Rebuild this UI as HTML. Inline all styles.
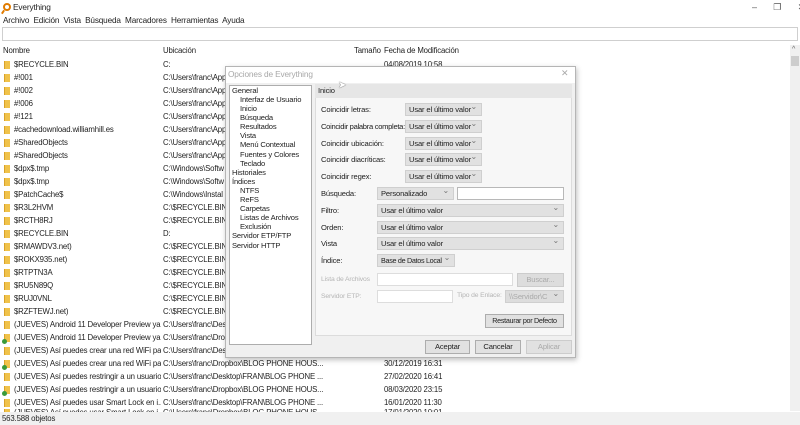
<!DOCTYPE html>
<html><head><meta charset="utf-8"><style>
*{margin:0;padding:0;box-sizing:border-box}
body{width:800px;height:425px;overflow:hidden;background:#fff;font-family:"Liberation Sans",sans-serif;font-size:7.8px;letter-spacing:-0.15px;color:#222;position:relative}
.a{position:absolute;white-space:nowrap}
.r{position:absolute;left:0;width:790px;height:13px;line-height:13px;white-space:nowrap}
.r i{position:absolute;left:4px;top:3px;width:6px;height:8px;background:#f0c24a;border-left:1px solid #d9a22a}
.r b{font-weight:normal;position:absolute;left:14px;width:147px;overflow:hidden}
.r u{text-decoration:none;position:absolute;left:163px;width:190px;overflow:hidden}
.r s{text-decoration:none;position:absolute;left:384px}
.g{position:absolute;left:2px;top:8px;width:5px;height:5px;border-radius:50%;background:#3a9a3a}
.dd{position:absolute;height:13px;background:#e1e1e1;border:1px solid #cfcfcf;line-height:11px;padding-left:3px;font-size:7.6px;white-space:nowrap;overflow:hidden}
.dd:after{content:"⌄";position:absolute;right:4px;top:-3px;color:#777;font-size:8px}
.tb{position:absolute;height:13px;background:#fff;border:1px solid #b8b8b8}
.btn{position:absolute;height:14px;background:#e1e1e1;border:1px solid #adadad;text-align:center;line-height:12px;font-size:7.6px;white-space:nowrap;overflow:hidden}
.lab{position:absolute;left:321px;font-size:7.6px;line-height:10px;white-space:nowrap}
.tr{position:absolute;font-size:7.6px;line-height:9px;white-space:nowrap}
</style></head><body>
<div class="a" style="left:3px;top:3px;width:8px;height:8px;border:2px solid #e07b00;border-radius:50%"></div>
<div class="a" style="left:2px;top:10px;width:2px;height:4px;background:#e07b00;transform:rotate(35deg)"></div>
<div class="a" style="left:13px;top:2px;font-size:8.3px">Everything</div>
<div class="a" style="left:752px;top:2px;font-size:9px;color:#555">–&nbsp;&nbsp;&nbsp;&nbsp;&nbsp;&nbsp;&nbsp;❐&nbsp;&nbsp;&nbsp;&nbsp;&nbsp;&nbsp;&nbsp;✕</div>
<div class="a" style="left:3px;top:16px;font-size:8.2px">Archivo&nbsp; Edición&nbsp; Vista&nbsp; Búsqueda&nbsp; Marcadores&nbsp; Herramientas&nbsp; Ayuda</div>
<div class="a" style="left:2px;top:27px;width:796px;height:14px;border:1px solid #cfcfcf"></div>
<div class="a" style="left:3px;top:46px">Nombre</div>
<div class="a" style="left:163px;top:46px">Ubicación</div>
<div class="a" style="left:354px;top:46px">Tamaño</div>
<div class="a" style="left:384px;top:46px">Fecha de Modificación</div>
<div class="a" style="left:790px;top:45px;width:10px;height:366px;background:#f0f0f0"></div>
<div class="a" style="left:791px;top:56px;width:8px;height:10px;background:#cdcdcd"></div>
<div class="a" style="left:792px;top:46px;font-size:7px;color:#666">^</div>

<div class="r" style="top:58px"><i></i><b>$RECYCLE.BIN</b><u>C:</u><s>04/08/2019 10:58</s></div>
<div class="r" style="top:71px"><i></i><b>#!001</b><u>C:\Users\franc\App</u></div>
<div class="r" style="top:84px"><i></i><b>#!002</b><u>C:\Users\franc\App</u></div>
<div class="r" style="top:97px"><i></i><b>#!006</b><u>C:\Users\franc\App</u></div>
<div class="r" style="top:110px"><i></i><b>#!121</b><u>C:\Users\franc\App</u></div>
<div class="r" style="top:123px"><i></i><b>#cachedownload.williamhill.es</b><u>C:\Users\franc\App</u></div>
<div class="r" style="top:136px"><i></i><b>#SharedObjects</b><u>C:\Users\franc\App</u></div>
<div class="r" style="top:149px"><i></i><b>#SharedObjects</b><u>C:\Users\franc\App</u></div>
<div class="r" style="top:162px"><i></i><b>$dpx$.tmp</b><u>C:\Windows\Softw</u></div>
<div class="r" style="top:175px"><i></i><b>$dpx$.tmp</b><u>C:\Windows\Softw</u></div>
<div class="r" style="top:188px"><i></i><b>$PatchCache$</b><u>C:\Windows\Instal</u></div>
<div class="r" style="top:201px"><i></i><b>$R3L2HVM</b><u>C:\$RECYCLE.BIN\S</u></div>
<div class="r" style="top:214px"><i></i><b>$RCTH8RJ</b><u>C:\$RECYCLE.BIN\S</u></div>
<div class="r" style="top:227px"><i></i><b>$RECYCLE.BIN</b><u>D:</u></div>
<div class="r" style="top:240px"><i></i><b>$RMAWDV3.net)</b><u>C:\$RECYCLE.BIN\S</u></div>
<div class="r" style="top:253px"><i></i><b>$ROKX935.net)</b><u>C:\$RECYCLE.BIN\S</u></div>
<div class="r" style="top:266px"><i></i><b>$RTPTN3A</b><u>C:\$RECYCLE.BIN\S</u></div>
<div class="r" style="top:279px"><i></i><b>$RU5N89Q</b><u>C:\$RECYCLE.BIN\S</u></div>
<div class="r" style="top:292px"><i></i><b>$RUJ0VNL</b><u>C:\$RECYCLE.BIN\S</u></div>
<div class="r" style="top:305px"><i></i><b>$RZFTEWJ.net)</b><u>C:\$RECYCLE.BIN\S</u></div>
<div class="r" style="top:318px"><i></i><b>(JUEVES) Android 11 Developer Preview ya...</b><u>C:\Users\franc\Des</u></div>
<div class="r" style="top:331px"><i></i><span class="g"></span><b>(JUEVES) Android 11 Developer Preview ya...</b><u>C:\Users\franc\Dro</u></div>
<div class="r" style="top:344px"><i></i><b>(JUEVES) Así puedes crear una red WiFi pa...</b><u>C:\Users\franc\Des</u></div>
<div class="r" style="top:357px"><i></i><span class="g"></span><b>(JUEVES) Así puedes crear una red WiFi pa...</b><u>C:\Users\franc\Dropbox\BLOG PHONE HOUS...</u><s>30/12/2019 16:31</s></div>
<div class="r" style="top:370px"><i></i><b>(JUEVES) Así puedes restringir a un usuario...</b><u>C:\Users\franc\Desktop\FRAN\BLOG PHONE ...</u><s>27/02/2020 16:41</s></div>
<div class="r" style="top:383px"><i></i><span class="g"></span><b>(JUEVES) Así puedes restringir a un usuario...</b><u>C:\Users\franc\Dropbox\BLOG PHONE HOUS...</u><s>08/03/2020 23:15</s></div>
<div class="r" style="top:396px"><i></i><b>(JUEVES) Así puedes usar Smart Lock en i...</b><u>C:\Users\franc\Desktop\FRAN\BLOG PHONE ...</u><s>16/01/2020 11:30</s></div>
<div class="r" style="top:406px"><i></i><span class="g"></span><b>(JUEVES) Así puedes usar Smart Lock en i...</b><u>C:\Users\franc\Dropbox\BLOG PHONE HOUS...</u><s>17/01/2020 10:01</s></div>
<div class="a" style="left:0;top:412px;width:800px;height:13px;background:#f0f0f0;padding-left:2px;line-height:13px">563.588 objetos</div>

<!-- dialog -->
<div class="a" style="left:225px;top:66px;width:351px;height:292px;background:#f0f0f0;border:1px solid #b5b5b5;box-shadow:1px 2px 5px rgba(0,0,0,.25)"></div>
<div class="a" style="left:226px;top:67px;width:349px;height:16px;background:#fff"></div>
<div class="a" style="left:228px;top:69px;font-size:8.3px;color:#a8a8a8">Opciones de Everything</div>
<div class="a" style="left:561px;top:68px;font-size:9px;color:#aaa">✕</div>
<div class="a" style="left:229px;top:85px;width:83px;height:260px;background:#fff;border:1px solid #adadad"></div>
<div class="tr" style="left:232px;top:86px">General</div>
<div class="tr" style="left:240px;top:95px">Interfaz de Usuario</div>
<div class="tr" style="left:240px;top:104px">Inicio</div>
<div class="tr" style="left:240px;top:113px">Búsqueda</div>
<div class="tr" style="left:240px;top:122px">Resultados</div>
<div class="tr" style="left:240px;top:131px">Vista</div>
<div class="tr" style="left:240px;top:140px">Menú Contextual</div>
<div class="tr" style="left:240px;top:150px">Fuentes y Colores</div>
<div class="tr" style="left:240px;top:159px">Teclado</div>
<div class="tr" style="left:232px;top:168px">Historiales</div>
<div class="tr" style="left:232px;top:177px">Índices</div>
<div class="tr" style="left:240px;top:186px">NTFS</div>
<div class="tr" style="left:240px;top:195px">ReFS</div>
<div class="tr" style="left:240px;top:204px">Carpetas</div>
<div class="tr" style="left:240px;top:213px">Listas de Archivos</div>
<div class="tr" style="left:240px;top:222px">Exclusión</div>
<div class="tr" style="left:232px;top:231px">Servidor ETP/FTP</div>
<div class="tr" style="left:232px;top:241px">Servidor HTTP</div>
<div class="a" style="left:315px;top:84px;width:257px;height:252px;background:#f7f7f7;border:1px solid #dcdcdc"></div>
<div class="a" style="left:315px;top:84px;width:257px;height:14px;background:#e6e6e6"></div>
<div class="a" style="left:318px;top:86px;font-size:7.6px">Inicio</div>
<div class="lab" style="top:105px">Coincidir letras:</div><div class="dd" style="left:405px;top:103px;width:77px">Usar el último valor</div>
<div class="lab" style="top:122px;letter-spacing:-0.3px">Coincidir palabra completa:</div><div class="dd" style="left:405px;top:120px;width:77px">Usar el último valor</div>
<div class="lab" style="top:139px">Coincidir ubicación:</div><div class="dd" style="left:405px;top:137px;width:77px">Usar el último valor</div>
<div class="lab" style="top:155px">Coincidir diacríticas:</div><div class="dd" style="left:405px;top:153px;width:77px">Usar el último valor</div>
<div class="lab" style="top:172px">Coincidir regex:</div><div class="dd" style="left:405px;top:170px;width:77px">Usar el último valor</div>
<div class="lab" style="top:189px">Búsqueda:</div><div class="dd" style="left:377px;top:187px;width:77px">Personalizado</div><div class="tb" style="left:457px;top:187px;width:107px"></div>
<div class="lab" style="top:206px">Filtro:</div><div class="dd" style="left:377px;top:204px;width:187px">Usar el último valor</div>
<div class="lab" style="top:223px">Orden:</div><div class="dd" style="left:377px;top:221px;width:187px">Usar el último valor</div>
<div class="lab" style="top:239px">Vista</div><div class="dd" style="left:377px;top:237px;width:187px">Usar el último valor</div>
<div class="lab" style="top:256px">Índice:</div><div class="dd" style="left:377px;top:254px;width:78px;font-size:7.2px;letter-spacing:-0.3px">Base de Datos Local</div>
<div class="lab" style="top:275px;color:#b5b5b5;font-size:6.8px">Lista de Archivos</div><div class="tb" style="left:377px;top:273px;width:136px;border-color:#ddd"></div>
<div class="btn" style="left:517px;top:273px;width:47px;color:#aaa;border-color:#ccc;background:#ddd">Buscar...</div>
<div class="lab" style="top:292px;color:#b5b5b5;font-size:6.8px">Servidor ETP:</div><div class="tb" style="left:377px;top:290px;width:76px;border-color:#ddd"></div>
<div class="a" style="left:457px;top:292px;font-size:6.8px;color:#b5b5b5">Tipo de Enlace:</div>
<div class="dd" style="left:505px;top:290px;width:59px;color:#aaa;background:#ddd">\\Servidor\C</div>
<div class="btn" style="left:485px;top:314px;width:79px;font-size:7.2px;letter-spacing:-0.3px">Restaurar por Defecto</div>
<div class="btn" style="left:425px;top:340px;width:45px">Aceptar</div>
<div class="btn" style="left:475px;top:340px;width:46px">Cancelar</div>
<div class="btn" style="left:526px;top:340px;width:46px;color:#aaa;border-color:#ccc">Aplicar</div>
<div class="a" style="left:338px;top:80px;font-size:10px;color:#fff;text-shadow:0 0 1px #000">➤</div>
</body></html>
